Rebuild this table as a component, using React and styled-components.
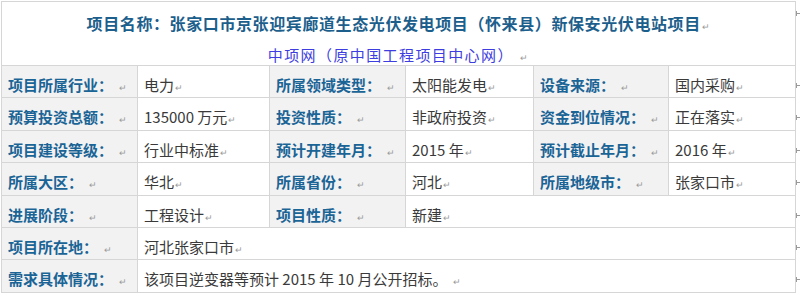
import React from 'react';
import styled, { createGlobalStyle } from 'styled-components';

const GlobalStyle = createGlobalStyle`
  html, body {
    margin: 0;
    padding: 0;
    background: #ffffff;
  }
  body {
    font-family: "Noto Sans CJK SC", "Liberation Sans", sans-serif;
  }
`;

const Page = styled.div`
  display: flex;
  align-items: flex-start;
  padding: 1px 0 0 1px;
`;

const Table = styled.div`
  display: grid;
  grid-template-columns: 135px 131px 135px 127px 134px 126px;
  grid-template-rows: 63px repeat(7, 31.4px);
  gap: 1px;
  background: #d6d6d6;
  border: 1px solid #d6d6d6;
`;

const TitleCell = styled.div`
  grid-column: 1 / -1;
  background: #ffffff;
  display: flex;
  flex-direction: column;
  align-items: center;
  padding-top: 9px;
  box-sizing: border-box;
`;

const Title = styled.div`
  font-size: 16px;
  font-weight: 700;
  color: #1d5f8c;
  letter-spacing: 0.6px;
  line-height: 24px;
`;

const SubTitle = styled.div`
  font-size: 15px;
  color: #3d3de0;
  letter-spacing: 1.4px;
  line-height: 20px;
  margin-top: 6px;
`;

const Cell = styled.div`
  grid-column: ${p => (p.$span ? `span ${p.$span}` : 'auto')};
  background: ${p => (p.$label ? '#f2f2f2' : '#ffffff')};
  color: ${p => (p.$label ? '#1a6496' : '#3a3a3a')};
  font-weight: ${p => (p.$label ? 700 : 400)};
  font-size: 15px;
  line-height: 18px;
  padding: 10px 0 0 6px;
  box-sizing: border-box;
  white-space: nowrap;
  overflow: hidden;
`;

const Mark = styled.span`
  font-size: 9px;
  font-weight: 400;
  color: #9a9a9a;
  margin-left: ${p => (p.$gap ? '6px' : '1px')};
`;

const MarkColumn = styled.div`
  display: grid;
  grid-template-rows: 64px repeat(7, 32.4px);
  width: 4px;
`;

const RowMark = styled.div`
  margin-top: ${p => p.$top}px;
  width: 3px;
  height: 5px;
  border-left: 1px solid #9a9a9a;
  position: relative;

  &::after {
    content: '';
    position: absolute;
    left: 0;
    top: 2px;
    width: 3px;
    height: 1px;
    background: #9a9a9a;
  }
`;

const rows = [
  [['项目所属行业：', '电力'], ['所属领域类型：', '太阳能发电'], ['设备来源：', '国内采购']],
  [['预算投资总额：', '135000 万元'], ['投资性质：', '非政府投资'], ['资金到位情况：', '正在落实']],
  [['项目建设等级：', '行业中标准'], ['预计开建年月：', '2015 年'], ['预计截止年月：', '2016 年']],
  [['所属大区：', '华北'], ['所属省份：', '河北'], ['所属地级市：', '张家口市']],
  [['进展阶段：', '工程设计'], ['项目性质：', '新建', 3]],
  [['项目所在地：', '河北张家口市', 5]],
  [['需求具体情况：', '该项目逆变器等预计 2015 年 10 月公开招标。', 5]],
];

export default function App() {
  return (
    <>
      <GlobalStyle />
      <Page>
        <Table>
          <TitleCell>
            <Title>
              项目名称：张家口市京张迎宾廊道生态光伏发电项目（怀来县）新保安光伏电站项目<Mark>↵</Mark>
            </Title>
            <SubTitle>
              中项网（原中国工程项目中心网）<Mark $gap>↵</Mark>
            </SubTitle>
          </TitleCell>
          {rows.map((row, i) =>
            row.map(([label, value, span], j) => (
              <React.Fragment key={`${i}-${j}`}>
                <Cell $label>
                  {label}
                  <Mark $gap>↵</Mark>
                </Cell>
                <Cell $span={span}>
                  {value}
                  <Mark $gap={value.endsWith('。')}>↵</Mark>
                </Cell>
              </React.Fragment>
            ))
          )}
        </Table>
        <MarkColumn>
          <RowMark $top={10} />
          {rows.map((_, i) => (
            <RowMark key={i} $top={18} />
          ))}
        </MarkColumn>
      </Page>
    </>
  );
}
